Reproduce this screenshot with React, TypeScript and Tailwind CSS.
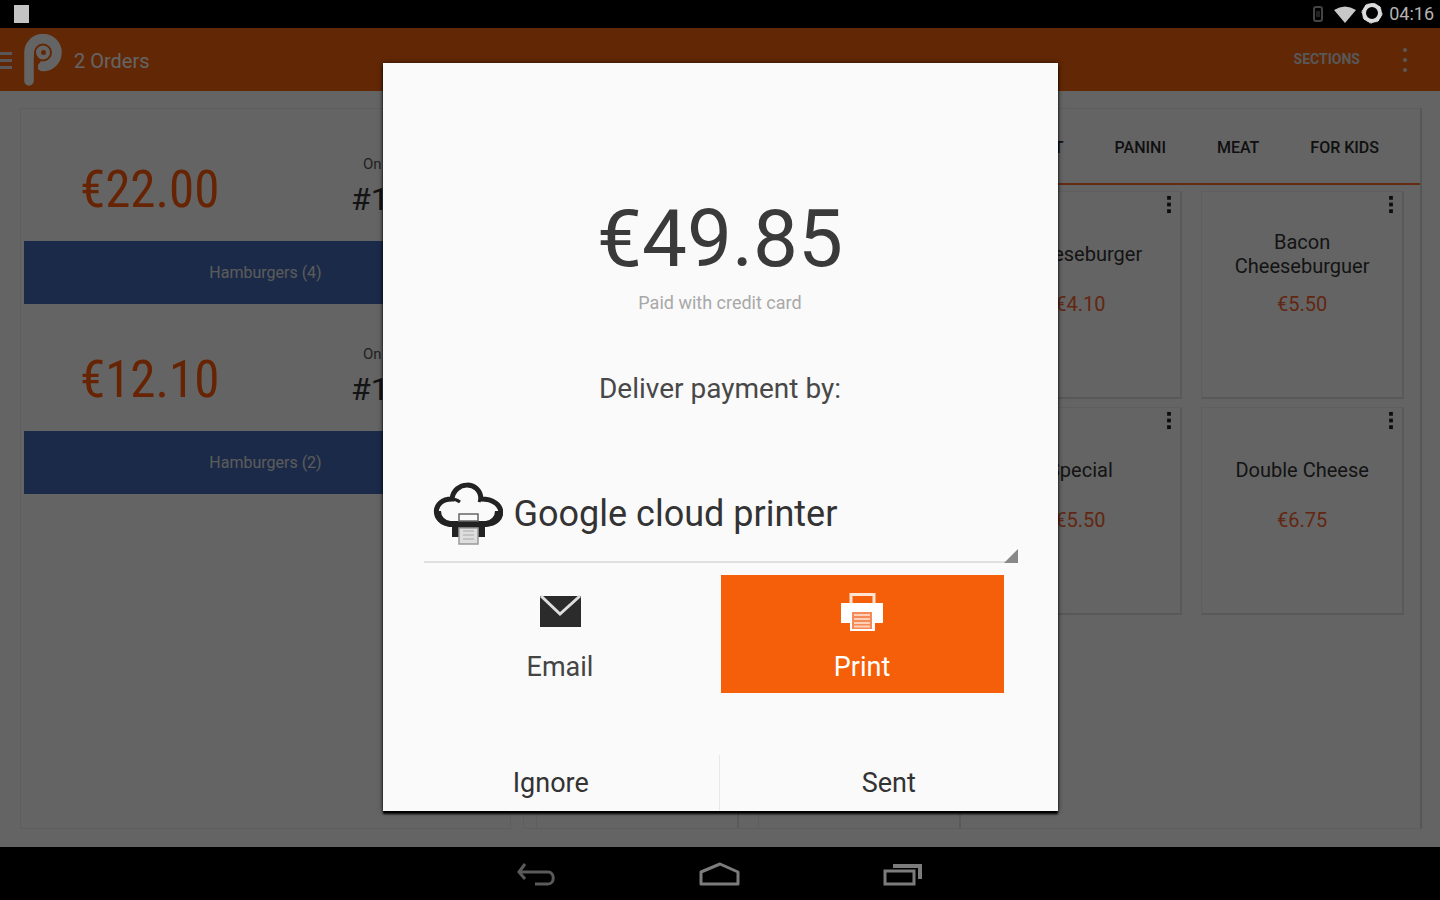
import React from "react";

type Item = { name?: string; price?: string };

const orders = [
  { total: "€22.00", number: "#1001", items: "Hamburgers (4)" },
  { total: "€12.10", number: "#1002", items: "Hamburgers (2)" },
];

const tabs = ["DESSERT", "PANINI", "MEAT", "FOR KIDS"];

const products: Item[] = [
  {},
  {},
  { name: "Cheeseburger", price: "€4.10" },
  { name: "Bacon Cheeseburguer", price: "€5.50" },
  {},
  {},
  { name: "Special", price: "€5.50" },
  { name: "Double Cheese", price: "€6.75" },
  {},
  {},
];

const Dots = ({ className }: { className: string }) => (
  <svg viewBox="0 0 6 20" className={className} fill="currentColor">
    <rect x="1" y="1" width="4" height="4" />
    <rect x="1" y="8" width="4" height="4" />
    <rect x="1" y="15" width="4" height="4" />
  </svg>
);

const StatusBar = () => (
  <div className="flex h-7 shrink-0 items-center bg-black pr-[6px] pl-[14px] text-[#b4b4b4]">
    <div className="h-[18px] w-[15px] bg-[#c4c4c4]" />
    <div className="ml-auto flex items-center">
      <svg viewBox="0 0 12 18" className="mr-[10px] h-[18px] w-3" fill="none" stroke="#444" strokeWidth="2">
        <rect x="2" y="2" width="8" height="14" rx="2" />
        <path d="M5 6v6M7 6v6" strokeWidth="1" />
      </svg>
      <svg viewBox="0 0 22 17" className="mr-[5px] h-[17px] w-[22px]" fill="#c8c8c8">
        <path d="M0 4Q11-3 22 4L11 17Z" />
      </svg>
      <svg viewBox="0 0 22 22" className="mr-[6px] h-[22px] w-[22px]" fill="none" stroke="#dcdcdc">
        <circle cx="11" cy="10" r="8" strokeWidth="4" />
        <circle cx="11" cy="10" r="10" strokeWidth="1" strokeDasharray="3 4.8" />
      </svg>
      <span className="text-[18px] leading-6">04:16</span>
    </div>
  </div>
);

const Logo = () => (
  <svg viewBox="0 0 38 52" className="ml-3 h-[52px] w-[38px]" fill="none">
    <path d="M5 47V19A14 14 0 1 1 19 32.500H18" stroke="#fafafa" strokeWidth="9.500" strokeLinecap="round" />
    <circle cx="19" cy="18.500" r="10.500" fill="#fafafa" />
    <path d="M10 18V36H14V31L17 27Z" fill="#f5620a" />
    <circle cx="19" cy="18.500" r="8" stroke="#f5620a" strokeWidth="2" />
    <circle cx="19.500" cy="18.500" r="2.500" fill="#f5620a" />
  </svg>
);

const Header = () => (
  <header className="flex h-[63px] shrink-0 items-center bg-[#f5620a] text-[#fafafa]">
    <button aria-label="Menu" className="mt-[2px] flex w-3 flex-col gap-1">
      <span className="h-[3px] bg-[#dcdcdc]" />
      <span className="h-[3px] bg-[#dcdcdc]" />
      <span className="h-[3px] bg-[#dcdcdc]" />
    </button>
    <Logo />
    <h1 className="mt-[2px] ml-3 text-[20px] leading-7">2 Orders</h1>
    <button className="ml-auto text-[14px] font-bold text-[#dcdcdc]">SECTIONS</button>
    <button aria-label="More options" className="mr-8 ml-[42px] text-[#dcdcdc]">
      <svg viewBox="0 0 6 26" className="h-[26px] w-[6px]" fill="currentColor">
        <circle cx="3" cy="3" r="2" />
        <circle cx="3" cy="13" r="2" />
        <circle cx="3" cy="23" r="2" />
      </svg>
    </button>
  </header>
);

const Orders = () => (
  <section className="w-[491px] shrink-0 border border-[#ececec] px-[3px] pt-[5px]">
    {orders.map((order) => (
      <div key={order.number}>
        <div className="flex h-[127px] pt-6 pl-14">
          <div className="w-[271px] font-['Roboto_Condensed','Liberation_Sans_Narrow',Roboto,sans-serif] text-[51px] leading-[103px] text-[#ff5a0a]">
            {order.total}
          </div>
          <div className="pt-4 text-[#333]">
            <div className="pl-3 text-[15px] leading-5 text-[#555]">On table</div>
            <div className="text-[32px] leading-[50px]">{order.number}</div>
          </div>
        </div>
        <div className="flex h-[63px] items-center justify-center bg-[#4169b4] text-base text-[#e4e4e4]">
          {order.items}
        </div>
      </div>
    ))}
  </section>
);

const ProductCard = ({ name, price }: Item) => (
  <div className="relative h-[208px] border border-r-2 border-b-2 border-[#ececec] border-r-[#e2e2e2] border-b-[#dcdcdc] px-8">
    {name && (
      <>
        <button aria-label={`${name} options`} className="absolute top-[3px] right-2 text-[#222]">
          <Dots className="h-[19px] w-[6px]" />
        </button>
        <div className="flex h-32 flex-col items-center justify-end pb-1 text-center text-[20px]">
          <div className="flex min-h-[72px] items-center leading-6 text-[#333]">{name}</div>
          <div className="mt-[2px] leading-6 text-[#f5622d]">{price}</div>
        </div>
      </>
    )}
  </div>
);

const Menu = () => (
  <section className="flex min-w-0 flex-1 flex-col overflow-hidden border border-r-2 border-[#ececec] border-r-[#d8d8d8]">
    <nav className="flex h-[76px] shrink-0 items-center justify-end gap-[51px] border-b-2 border-[#ff6a28] pt-1 pr-[41px]">
      {tabs.map((tab) => (
        <button key={tab} className="text-base font-medium text-[#2a2a2a]">
          {tab}
        </button>
      ))}
    </nav>
    <div className="grid grid-cols-4 gap-x-[19px] gap-y-2 pt-[6px] pr-4 pl-3">
      {products.map((product, i) => (
        <ProductCard key={i} {...product} />
      ))}
    </div>
  </section>
);

const CloudPrinterIcon = () => (
  <svg viewBox="0 0 70 64" className="pointer-events-none absolute top-[15px] left-[9px] h-16 w-[70px]">
    <path d="M19 42H52V55H19Z" fill="#222" />
    <path
      d="M17 42C-1 41-2 17 19 17C21-1 47-2 48 17C74 17 73 42 53 42Z"
      fill="#fafafa"
      stroke="#222"
      strokeWidth="5"
    />
    <path d="M5 29C5 36 10 41 17 42H53C60 41 65 36 65 29" fill="none" stroke="#222" strokeWidth="6" />
    <path d="M18 17Q23 17 27 20M48 14L46 20" fill="none" stroke="#222" strokeWidth="3" />
    <path d="M26 32H45V39H26Z" fill="#fafafa" stroke="#666" strokeWidth="1.500" />
    <path d="M26 46H45V62H26Z" fill="#dedede" stroke="#999" strokeWidth="1.500" />
    <path d="M30 49H41M30 53H41M30 57H41" stroke="#bbb" strokeWidth="1.500" />
  </svg>
);

const MailIcon = () => (
  <svg viewBox="0 0 42 32" className="h-8 w-[42px]">
    <rect x="1" y="1" width="41" height="31" fill="#2b2b2b" />
    <path d="M2 1L21 19L41 1" fill="none" stroke="#dedede" strokeWidth="3" />
  </svg>
);

const PrintIcon = () => (
  <svg viewBox="0 0 42 38" className="h-[38px] w-[42px]">
    <path d="M10 10V1.500H33V10" fill="none" stroke="#ffe4d4" strokeWidth="3" />
    <path d="M0 10H42V30H34V38H9V30H0Z" fill="#fff" />
    <path d="M11 19H31V36H11Z" fill="#f58a58" />
    <path d="M13 22H29M13 26H29M13 30H29M13 33.500H29" stroke="#ffd0b5" strokeWidth="2" />
  </svg>
);

const PaymentDialog = () => (
  <div
    role="dialog"
    aria-label="Payment"
    className="mb-[2px] flex w-[675px] max-w-full flex-col bg-[#fafafa] pt-[136px] text-[#333] shadow-[0_3px_2px_#000,0_0_5px_rgba(0,0,0,0.6)]"
  >
    <div className="text-center text-[80px] leading-[80px] text-[#3a3a3a]">€49.85</div>
    <div className="mt-3 text-center text-[18px] leading-6 text-[#a8a8a8]">Paid with credit card</div>
    <label htmlFor="delivery" className="mt-[58px] text-center text-[28px] leading-8 text-[#484848]">
      Deliver payment by:
    </label>
    <div className="relative mt-[62px] mr-10 ml-[41px]">
      <CloudPrinterIcon />
      <select
        id="delivery"
        className="h-24 w-full appearance-none border-b-2 border-[#e0e0e0] bg-transparent pl-[90px] text-[36px] text-[#333] outline-none"
      >
        <option>Google cloud printer</option>
      </select>
      <svg viewBox="0 0 14 14" className="pointer-events-none absolute right-0 bottom-0 h-[14px] w-[14px]">
        <path d="M14 0V14H0Z" fill="#888" />
      </svg>
    </div>
    <div className="mt-3 mr-[54px] ml-[17px] flex h-[118px] text-[27px] leading-8">
      <button className="flex flex-1 flex-col items-center gap-6 pt-5 text-[#444]">
        <MailIcon />
        Email
      </button>
      <button className="flex w-[283px] flex-col items-center gap-5 bg-[#f55f0a] pt-[18px] text-white">
        <PrintIcon />
        Print
      </button>
    </div>
    <div className="mt-[62px] grid h-14 grid-cols-2 text-[27px] leading-8 text-[#333]">
      <button className="border-r border-[#e8e8e8]">Ignore</button>
      <button>Sent</button>
    </div>
  </div>
);

const NavigationBar = () => (
  <nav className="flex h-[53px] shrink-0 items-center justify-center gap-[142px] bg-black text-[#7c7c7c]">
    <button aria-label="Back">
      <svg viewBox="0 0 42 30" className="h-[30px] w-[42px]" fill="none" stroke="#5a5a5a" strokeWidth="3">
        <path d="M6 13H33C40 13 40 25 33 25H20" />
        <path d="M10 5L4 13L10 20" />
      </svg>
    </button>
    <button aria-label="Home">
      <svg viewBox="0 0 42 30" className="h-[30px] w-[42px]" fill="none" stroke="currentColor" strokeWidth="3">
        <path d="M2 25V13L21 5L39 13V25Z" strokeLinejoin="round" />
      </svg>
    </button>
    <button aria-label="Recent apps">
      <svg viewBox="0 0 42 30" className="h-[30px] w-[42px]" fill="none" stroke="currentColor" strokeWidth="3">
        <path d="M2 12H31V25H2Z" />
        <path d="M10 7H37V20" strokeWidth="4" />
      </svg>
    </button>
  </nav>
);

const App: React.FC = () => {
  return (
    <div className="flex h-screen flex-col overflow-hidden bg-black font-[Roboto,sans-serif]">
      <StatusBar />
      <main className="relative flex min-h-0 flex-1 flex-col bg-[#fafafa]">
        <Header />
        <div className="flex min-h-0 flex-1 gap-3 pt-[17px] pr-[18px] pb-[18px] pl-5">
          <Orders />
          <Menu />
        </div>
        <div className="absolute inset-0 flex items-center justify-center bg-black/60">
          <PaymentDialog />
        </div>
      </main>
      <NavigationBar />
    </div>
  );
};

export default App;
